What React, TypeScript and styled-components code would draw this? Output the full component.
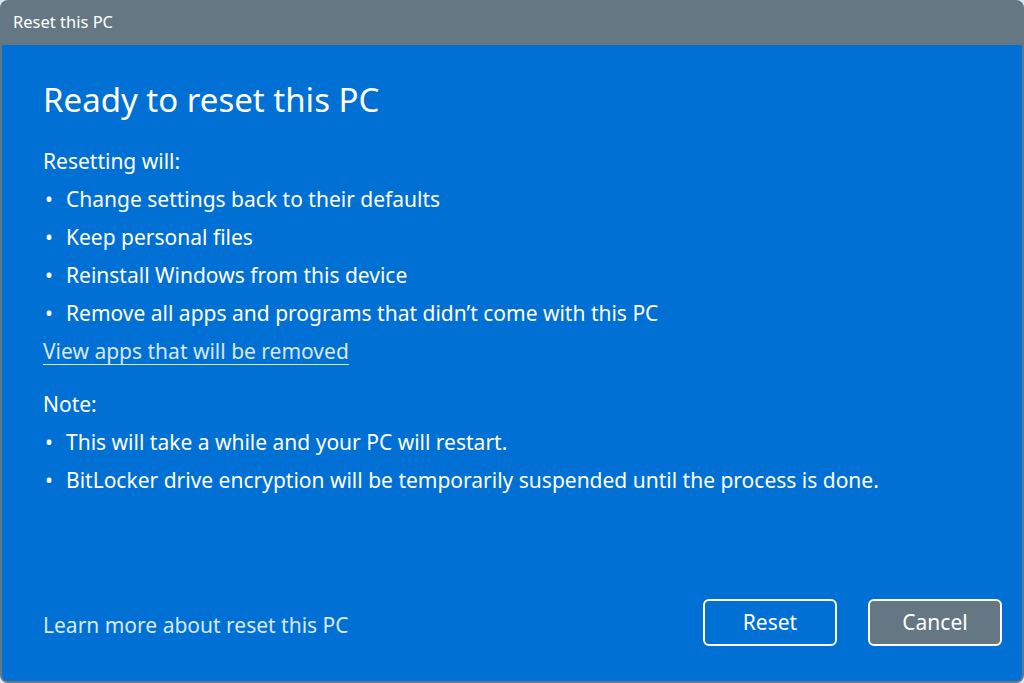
import styled, { createGlobalStyle } from "styled-components";

const GlobalStyle = createGlobalStyle`
  html, body {
    margin: 0;
    padding: 0;
    background: #dbe7f3;
  }
  * {
    box-sizing: border-box;
  }
`;

const Window = styled.div`
  width: 1024px;
  height: 683px;
  display: flex;
  flex-direction: column;
  background: #657782;
  border-radius: 8px;
  padding: 0 2px 2px 2px;
  font-family: "Noto Sans", "Open Sans", sans-serif;
  color: #ffffff;
  overflow: hidden;
`;

const TitleBar = styled.div`
  height: 45px;
  display: flex;
  align-items: center;
  padding-left: 11px;
  padding-bottom: 2px;
  font-size: 16.5px;
`;

const Body = styled.div`
  flex: 1;
  display: flex;
  flex-direction: column;
  background: #0070d4;
  border-radius: 0 0 6px 6px;
  padding: 33px 20px 35px 41px;
`;

const Heading = styled.h1`
  margin: 0 0 20px 0;
  font-size: 33px;
  font-weight: 400;
  line-height: 44px;
`;

const Label = styled.div`
  font-size: 21px;
  line-height: 38px;
`;

const List = styled.ul`
  list-style: none;
  margin: 0;
  padding: 0;
`;

const Item = styled.li`
  font-size: 21px;
  line-height: 38px;
  display: flex;

  &::before {
    content: "•";
    width: 21px;
    padding-left: 2px;
  }
`;

const InlineLink = styled.a`
  font-size: 21px;
  line-height: 38px;
  color: #d7e8f8;
  text-decoration: underline;
  text-decoration-thickness: 1px;
  text-underline-offset: 5px;
  margin-bottom: 15px;
  align-self: flex-start;
`;

const Footer = styled.div`
  margin-top: auto;
  display: flex;
  align-items: center;
  gap: 31px;
`;

const FooterLink = styled.a`
  font-size: 21px;
  color: #d7e8f8;
  text-decoration: none;
  margin-right: auto;
  padding-top: 5px;
`;

const Button = styled.button<{ $secondary?: boolean }>`
  width: 134px;
  height: 47px;
  border: 2px solid #ffffff;
  border-radius: 6px;
  background: ${(p) => (p.$secondary ? "#657782" : "#0070d4")};
  color: #ffffff;
  font-family: inherit;
  font-size: 21px;
  padding: 0 0 2px 0;
`;

const resetItems = [
  "Change settings back to their defaults",
  "Keep personal files",
  "Reinstall Windows from this device",
  "Remove all apps and programs that didn’t come with this PC",
];

const noteItems = [
  "This will take a while and your PC will restart.",
  "BitLocker drive encryption will be temporarily suspended until the process is done.",
];

export default function App() {
  return (
    <>
      <GlobalStyle />
      <Window>
        <TitleBar>Reset this PC</TitleBar>
        <Body>
          <Heading>Ready to reset this PC</Heading>
          <Label>Resetting will:</Label>
          <List>
            {resetItems.map((t) => (
              <Item key={t}>{t}</Item>
            ))}
          </List>
          <InlineLink href="#">View apps that will be removed</InlineLink>
          <Label>Note:</Label>
          <List>
            {noteItems.map((t) => (
              <Item key={t}>{t}</Item>
            ))}
          </List>
          <Footer>
            <FooterLink href="#">Learn more about reset this PC</FooterLink>
            <Button>Reset</Button>
            <Button $secondary>Cancel</Button>
          </Footer>
        </Body>
      </Window>
    </>
  );
}
